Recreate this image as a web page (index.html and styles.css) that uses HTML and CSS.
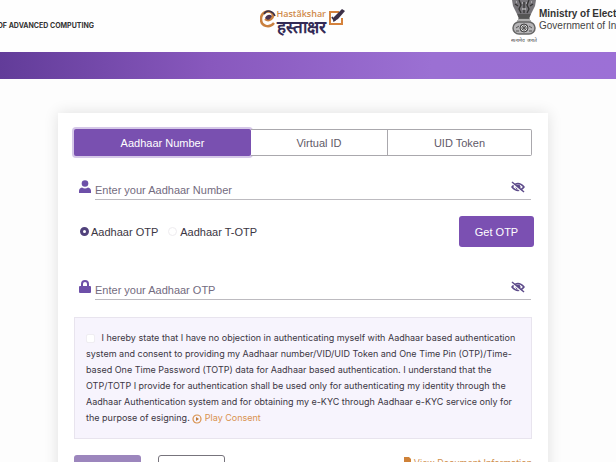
FILE: index.html
```html
<!DOCTYPE html>
<html lang="en">
<head>
    <meta charset="UTF-8">
    <meta name="viewport" content="width=device-width, initial-scale=1.0">
    <title>e-Hastakshar</title>
    <link rel="stylesheet" href="styles.css">
</head>
<body>
    <header class="header">
        <div class="org">CENTRE FOR DEVELOPMENT OF ADVANCED COMPUTING</div>
        <div class="logo">
            <svg class="logo-e" viewBox="0 0 16 20">
                <path d="M14 14C9 20 1 17 1 10C1 3 8 1 12 4C15 9 9 13 5 10" fill="none" stroke="#c9803f" stroke-width="2.5"/>
                <path d="M4 5C7 0 13 2 15 7" fill="none" stroke="#3a3148" stroke-width="1.5"/>
                <path d="M5 9C7 5 10 5 12 7C10 11 8 12 5 9Z" fill="#4a3350"/>
            </svg>
            <div class="logo-text">
                <span class="logo-en">Hastãkshar</span>
                <span class="logo-hi" lang="hi">हस्ताक्षर</span>
            </div>
            <svg class="logo-pen" viewBox="0 0 18 20">
                <path d="M11 4H2V16H14V10" fill="none" stroke="#d5823c" stroke-width="2"/>
                <path d="M5 14L6 9L14 1L17 3L10 11Z" fill="#3c3048"/>
                <path d="M4 9L7 13" stroke="#3c3048" stroke-width="2"/>
            </svg>
        </div>
        <div class="ministry">
            <div class="emblem">
                <svg viewBox="0 0 26 36">
                    <path d="M1 0H25L24 6L22 10L20 14H6L4 10L2 6Z" fill="#77757a"/>
                    <path d="M8 0L10 5L8 9L10 13M18 0L16 5L18 9L16 13M13 2V13M4 4L7 6M22 4L19 6" fill="none" stroke="#333" stroke-width="1.3"/>
                    <path d="M11 3H12M15 3H16M5 2H6M20 2H21M11 9H15" stroke="#ddd" stroke-width="1.2"/>
                    <path d="M6 14H20L18 19H8Z" fill="#555"/>
                    <path d="M7 19H19M6 21H20" stroke="#666" stroke-width="1"/>
                    <rect x="2" y="22" width="22" height="12" rx="6" fill="#b5b4b6" stroke="#666" stroke-width="1.5"/>
                    <circle cx="13" cy="28" r="4" fill="#ddd" stroke="#444"/>
                    <path d="M13 24V32M9 28H17M10 25L16 31M16 25L10 31M5 28L8 26M5 31H8M18 26L21 28M18 31H21" stroke="#555" stroke-width="1"/>
                </svg>
                <span class="motto" lang="hi">सत्यमेव जयते</span>
            </div>
            <div class="ministry-text">
                <strong>Ministry of Electronics and Information Technology</strong>
                <span>Government of India</span>
            </div>
        </div>
    </header>
    <div class="banner"></div>

    <main>
        <form class="card">
            <div class="tabs">
                <button type="button" class="tab active">Aadhaar Number</button>
                <button type="button" class="tab">Virtual ID</button>
                <button type="button" class="tab">UID Token</button>
            </div>

            <div class="field">
                <label for="aadhaar" aria-label="Aadhaar Number">
                    <svg class="icon" viewBox="0 0 12 13"><circle cx="6" cy="3.5" r="3.3"/><path d="M0 13V11Q0 8 3 7.5Q6 9.5 9 7.5Q12 8 12 11V13Z"/></svg>
                </label>
                <div class="line">
                    <input type="text" id="aadhaar" placeholder="Enter your Aadhaar Number">
                    <button type="button" class="eye" aria-label="Show number">
                        <svg viewBox="0 0 14 12"><path d="M1 6Q7 -1 13 6Q7 13 1 6Z" fill="none" stroke="#5d4b8a" stroke-width="1.5"/><circle cx="7" cy="6" r="2.5" fill="#5d4b8a"/><path d="M1 2L12 12" stroke="#fff" stroke-width="1.5"/><path d="M1 1L13 11" stroke="#5d4b8a" stroke-width="1.5"/></svg>
                    </button>
                </div>
            </div>

            <div class="otp-row">
                <label><input type="radio" name="otp" checked>Aadhaar OTP</label>
                <label class="totp"><input type="radio" name="otp">Aadhaar T-OTP</label>
                <button type="button" class="get-otp">Get OTP</button>
            </div>

            <div class="field">
                <label for="otp" aria-label="Aadhaar OTP">
                    <svg class="icon" viewBox="0 0 12 13"><path d="M3 6V4Q3 1 6 1Q9 1 9 4V6" fill="none" stroke="#6d4fa8" stroke-width="2"/><rect y="6" width="12" height="7" rx="1"/></svg>
                </label>
                <div class="line">
                    <input type="text" id="otp" placeholder="Enter your Aadhaar OTP">
                    <button type="button" class="eye" aria-label="Show OTP">
                        <svg viewBox="0 0 14 12"><path d="M1 6Q7 -1 13 6Q7 13 1 6Z" fill="none" stroke="#5d4b8a" stroke-width="1.5"/><circle cx="7" cy="6" r="2.5" fill="#5d4b8a"/><path d="M1 2L12 12" stroke="#fff" stroke-width="1.5"/><path d="M1 1L13 11" stroke="#5d4b8a" stroke-width="1.5"/></svg>
                    </button>
                </div>
            </div>

            <div class="consent">
                <input type="checkbox" id="agree">
                <label for="agree">I hereby state that I have no objection in authenticating myself with Aadhaar based authentication<br>
                system and consent to providing my Aadhaar number/VID/UID Token and One Time Pin (OTP)/Time-<br>
                based One Time Password (TOTP) data for Aadhaar based authentication. I understand that the<br>
                OTP/TOTP I provide for authentication shall be used only for authenticating my identity through the<br>
                Aadhaar Authentication system and for obtaining my e-KYC through Aadhaar e-KYC service only for<br>
                the purpose of esigning.</label>
                <a href="#" class="play"><svg viewBox="0 0 10 10"><circle cx="5" cy="5" r="4" fill="none" stroke="#d9924f" stroke-width="1.2"/><path d="M4 3L7 5L4 7Z" fill="#c07a3a"/></svg> Play Consent</a>
            </div>

            <div class="actions">
                <button type="submit" class="submit" disabled>Submit</button>
                <button type="button" class="cancel">Cancel</button>
                <a href="#" class="doc"><svg viewBox="0 0 7 9"><path d="M0 0H5L7 2V9H0Z" fill="#cf8238"/></svg>View Document Information</a>
            </div>
        </form>
    </main>
</body>
</html>
```
FILE: styles.css
```css
* {
    box-sizing: border-box;
}
body {
    margin: 0;
    height: 100vh;
    overflow: hidden;
    font-family: "Liberation Sans", Arial, sans-serif;
    font-size: 11px;
    color: #3b3643;
    background-color: #fdfdfd;
}
button, input {
    font-family: inherit;
    font-size: 11px;
}
svg {
    display: block;
}
.header {
    display: grid;
    grid-template-columns: 94px 1fr 105px;
    height: 52px;
    background-color: #fefefe;
}
.org {
    display: flex;
    justify-content: flex-end;
    padding-top: 20px;
    overflow: hidden;
    white-space: nowrap;
    font-family: Inter, sans-serif;
    font-size: 7px;
    font-weight: bold;
    line-height: 11px;
    color: #333;
}
.logo {
    display: flex;
    justify-content: center;
    padding-top: 8px;
}
.logo-e {
    width: 16px;
    height: 20px;
    margin-top: 1px;
}
.logo-text {
    display: flex;
    flex-direction: column;
    width: 52px;
    padding-left: 1px;
    white-space: nowrap;
}
.logo-en {
    font-family: "Open Sans", sans-serif;
    font-size: 9px;
    font-weight: 600;
    line-height: 11px;
    color: #d08a4a;
}
.logo-hi {
    font-size: 17px;
    font-weight: bold;
    line-height: 18px;
    color: #332b56;
}
.logo-pen {
    width: 18px;
    height: 20px;
}
.ministry {
    display: flex;
    gap: 2px;
    overflow: hidden;
    white-space: nowrap;
}
.emblem {
    width: 26px;
    flex: none;
    display: flex;
    flex-direction: column;
    align-items: center;
}
.emblem svg {
    width: 26px;
    height: 36px;
}
.motto {
    font-size: 5px;
    line-height: 8px;
    color: #444;
}
.ministry-text {
    display: flex;
    flex-direction: column;
    padding-top: 8px;
    font-size: 10px;
    line-height: 12px;
    color: #444;
}
.ministry-text strong {
    color: #333;
}
.banner {
    height: 27px;
    background: linear-gradient(to right, #623c99, #8858bd 34%, #9b70d3 70%, #9c70d6);
}
main {
    padding: 34px 68px 0 58px;
}
.card {
    padding: 16px;
    background-color: #fff;
    box-shadow: 0 0 14px rgba(0, 0, 0, 0.12);
}
.tabs {
    display: grid;
    grid-template-columns: 177fr 137fr 144fr;
    height: 27px;
}
.tab {
    padding: 0;
    border: 1px solid #aaa8ad;
    border-left: none;
    background-color: #fff;
    color: #5f5a68;
}
.tab:last-child {
    border-radius: 0 2px 2px 0;
}
.tab.active {
    border: none;
    border-radius: 2px;
    background-color: #7950b0;
    color: #fff;
    box-shadow: 0 0 0 2px #d5c8e8;
}
.field {
    display: flex;
    gap: 4px;
    padding: 0 1px 0 5px;
}
.field label {
    padding-top: 4px;
}
.icon {
    width: 12px;
    height: 13px;
    fill: #6d4fa8;
}
.line {
    flex: 1;
    display: flex;
    align-items: center;
    height: 24px;
    border-bottom: 1px solid #bdbbc0;
}
.line input {
    flex: 1;
    height: 22px;
    margin-top: 4px;
    padding: 0;
    border: none;
    outline: none;
    background: none;
}
.line input::placeholder {
    color: #736b80;
}
.eye {
    padding: 0 6px 2px;
    border: none;
    background: none;
}
.eye svg {
    width: 14px;
    height: 12px;
}
.tabs + .field {
    margin-top: 20px;
}
.otp-row {
    display: flex;
    align-items: center;
    margin: 16px -2px 29px 0;
    padding-left: 6px;
}
.otp-row label {
    display: flex;
    align-items: center;
    gap: 2px;
}
.otp-row .totp {
    margin-left: 10px;
    gap: 3px;
}
input[type="radio"] {
    appearance: none;
    width: 9px;
    height: 9px;
    margin: 0;
    border: 1px solid #eeecef;
    border-radius: 50%;
}
input[type="radio"]:checked {
    border: 3px solid #51427c;
}
.get-otp {
    width: 75px;
    height: 31px;
    margin-left: auto;
    border: none;
    border-radius: 3px;
    background-color: #7b50b2;
    color: #fff;
}
.consent {
    margin-top: 17px;
    padding: 12px 11px;
    border: 1px solid #e8e4ee;
    background-color: #f7f4fd;
    min-height: 122px;
    font-family: Inter, sans-serif;
    font-size: 9px;
    line-height: 16px;
    white-space: nowrap;
    overflow: hidden;
}
.consent input {
    appearance: none;
    width: 9px;
    height: 9px;
    margin: 0 4px 0 0;
    border: 1px solid #efedf2;
    border-radius: 2px;
    background-color: #fff;
    vertical-align: middle;
}
.play {
    color: #d9924f;
    text-decoration: none;
}
.play svg {
    display: inline-block;
    width: 10px;
    height: 10px;
    vertical-align: middle;
}
.actions {
    display: flex;
    align-items: flex-start;
    gap: 17px;
    margin-top: 16px;
}
.submit, .cancel {
    width: 67px;
    height: 31px;
    border: none;
    border-radius: 3px;
    background-color: #9c86bd;
    color: #fff;
}
.cancel {
    border: 1px solid #77747c;
    background-color: #fff;
    color: #5f5a68;
}
.doc {
    display: flex;
    gap: 3px;
    margin-left: auto;
    padding-top: 2px;
    font-family: Inter, sans-serif;
    font-size: 9px;
    line-height: 11px;
    color: #d08f4e;
}
.doc svg {
    width: 7px;
    height: 9px;
}
```
